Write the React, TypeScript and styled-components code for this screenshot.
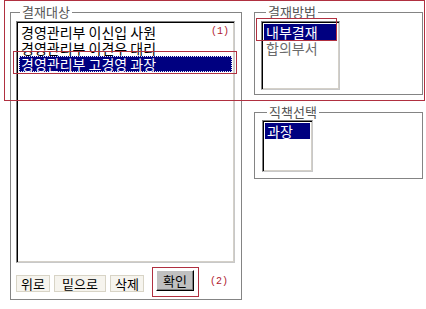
import { createGlobalStyle, styled } from 'styled-components';

const GlobalStyle = createGlobalStyle`
    html, body {
        margin: 0;
        padding: 0;
        background: #fff;
    }
    body {
        font-family: 'Noto Sans CJK KR', 'Noto Sans', sans-serif;
        color: #000;
    }
`;

const Page = styled.div`
    position: relative;
    width: 426px;
    height: 309px;
    box-sizing: border-box;
    padding: 4px 0 0 10px;
    display: flex;
    gap: 12px;
    align-items: flex-start;
`;

const Group = styled.fieldset<{ $w: number; $h: number; $pad: number }>`
    margin: 0;
    padding: 0 0 0 ${(p) => p.$pad}px;
    width: ${(p) => p.$w}px;
    height: ${(p) => p.$h}px;
    box-sizing: border-box;
    border: 1px solid #848484;
    min-width: 0;
`;

const Legend = styled.legend<{ $ml: number }>`
    margin-left: ${(p) => p.$ml}px;
    padding: 0 2px;
    font-size: 13px;
    line-height: 16px;
    height: 16px;
    color: #555;
`;

const RightCol = styled.div`
    display: flex;
    flex-direction: column;
    gap: 9px;
`;

const ListBox = styled.div<{ $w: number; $h: number; $mt: number }>`
    width: ${(p) => p.$w}px;
    height: ${(p) => p.$h}px;
    margin-top: ${(p) => p.$mt}px;
    box-sizing: border-box;
    background: #fff;
    border-top: 1px solid #808080;
    border-left: 1px solid #808080;
    border-right: 1px solid #c8c8c8;
    border-bottom: 1px solid #c8c8c8;
    box-shadow: inset 1px 1px 0 #000, inset -1px -1px 0 #d4d0c8;
    padding: 2px 2px 0 2px;
    overflow: hidden;
`;

const Item = styled.div<{ $sel?: boolean; $dim?: boolean; $focus?: boolean }>`
    display: flex;
    justify-content: space-between;
    align-items: center;
    height: 16px;
    padding: 0 3px 0 2px;
    font-size: 14px;
    line-height: 16px;
    white-space: nowrap;
    background: ${(p) => (p.$sel ? '#000080' : 'transparent')};
    color: ${(p) => (p.$sel ? '#fff' : p.$dim ? '#6a6a6a' : '#000')};
    outline: ${(p) => (p.$focus ? '1px dotted #e8e8ff' : 'none')};
    outline-offset: -1px;
`;

const Note = styled.span`
    font-family: 'Liberation Mono', monospace;
    font-size: 10px;
    color: #b02030;
    letter-spacing: 0;
`;

const ButtonRow = styled.div`
    display: flex;
    align-items: flex-end;
    gap: 4px;
    margin-top: 7px;
`;

const SmallButton = styled.button<{ $w: number }>`
    width: ${(p) => p.$w}px;
    height: 17px;
    margin: 0;
    padding: 0;
    font-family: inherit;
    font-size: 13px;
    line-height: 15px;
    color: #000;
    background: #f6f4ee;
    border: 1px solid #d8d4c6;
`;

const OkButton = styled.button`
    width: 38px;
    height: 21px;
    margin-left: 8px;
    margin-bottom: 1px;
    padding: 0;
    font-family: inherit;
    font-size: 13px;
    line-height: 17px;
    color: #000;
    background: #c0c0c0;
    border-top: 1px solid #fff;
    border-left: 1px solid #fff;
    border-right: 1px solid #000;
    border-bottom: 1px solid #000;
    box-shadow: inset -1px -1px 0 #808080;
`;

const OkNote = styled(Note)`
    margin-left: 12px;
    margin-bottom: 5px;
`;

const Mark = styled.div<{ $x: number; $y: number; $w: number; $h: number }>`
    position: absolute;
    left: ${(p) => p.$x}px;
    top: ${(p) => p.$y}px;
    width: ${(p) => p.$w}px;
    height: ${(p) => p.$h}px;
    box-sizing: border-box;
    border: 1px solid #b03040;
    pointer-events: none;
`;

const App = () => {
    return (
        <>
            <GlobalStyle />
            <Page>
                <Group $w={232} $h={296} $pad={5}>
                    <Legend $ml={4}>결재대상</Legend>
                    <ListBox $w={219} $h={242} $mt={1}>
                        <Item>
                            경영관리부 이신입 사원<Note>(1)</Note>
                        </Item>
                        <Item>경영관리부 이견우 대리</Item>
                        <Item $sel $focus>
                            경영관리부 고경영 과장
                        </Item>
                    </ListBox>
                    <ButtonRow>
                        <SmallButton $w={34}>위로</SmallButton>
                        <SmallButton $w={52}>밑으로</SmallButton>
                        <SmallButton $w={34}>삭제</SmallButton>
                        <OkButton>확인</OkButton>
                        <OkNote>(2)</OkNote>
                    </ButtonRow>
                </Group>
                <RightCol>
                    <Group $w={169} $h={91} $pad={6}>
                        <Legend $ml={5}>결재방법</Legend>
                        <ListBox $w={79} $h={69} $mt={1}>
                            <Item $sel>내부결재</Item>
                            <Item $dim>합의부서</Item>
                        </ListBox>
                    </Group>
                    <Group $w={169} $h={75} $pad={7}>
                        <Legend $ml={5}>직책선택</Legend>
                        <ListBox $w={51} $h={52} $mt={0}>
                            <Item $sel>과장</Item>
                        </ListBox>
                    </Group>
                </RightCol>
                <Mark $x={4} $y={0} $w={421} $h={101} />
                <Mark $x={13} $y={51} $w={224} $h={23} />
                <Mark $x={256} $y={18} $w={81} $h={23} />
                <Mark $x={152} $y={267} $w={47} $h={30} />
            </Page>
        </>
    );
};

export default App;
